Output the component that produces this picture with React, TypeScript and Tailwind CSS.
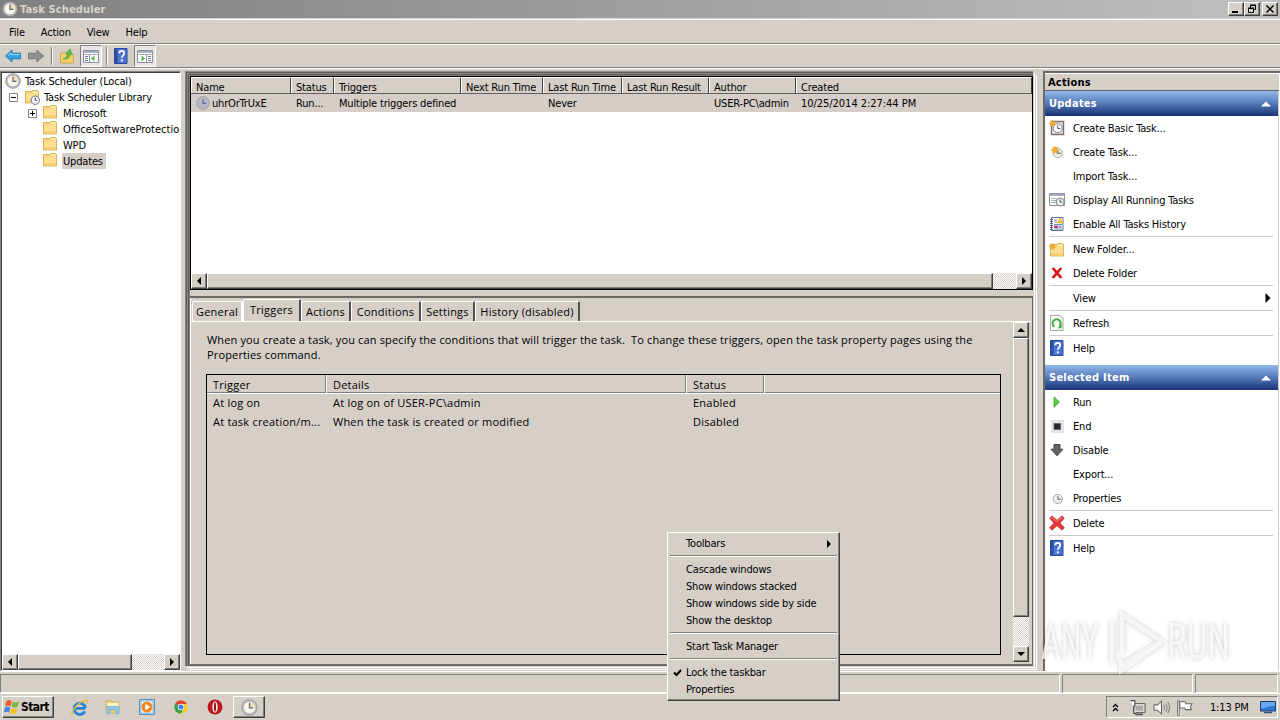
import type { ReactNode } from 'react';
import clsx from 'clsx';

const UI = 'font-["DejaVu_Sans_Condensed","DejaVu_Sans",sans-serif] [font-stretch:condensed] text-[11px] tracking-[-0.17px] text-black';
const RAISED = 'bg-[#d5cfc8] border border-t-white border-l-white border-r-[#404040] border-b-[#404040] shadow-[inset_-1px_-1px_0_#808080]';
const DITHER = 'bg-[repeating-conic-gradient(#fff_0_25%,#d5cfc8_0_50%)] bg-[length:2px_2px]';

type IconProps = { children: ReactNode; size?: number; className?: string };

function Svg({ children, size = 16, className }: IconProps) {
  return (
    <svg width={size} height={size} viewBox="0 0 16 16" className={clsx('shrink-0', className)}>
      {children}
    </svg>
  );
}

function Label({ children, className }: { children: ReactNode; className?: string }) {
  return <span className={clsx('pt-[2px]', className)}>{children}</span>;
}

function Clock({ size = 16, tint = '#fbf8ea' }: { size?: number; tint?: string }) {
  return (
    <Svg size={size}>
      <circle cx="8" cy="8" r="7.3" fill="#c3c5ca" stroke="#85878d" strokeWidth=".8" />
      <circle cx="8" cy="8" r="5.700" fill={tint} stroke="#a5a8b0" strokeWidth=".6" />
      {tint === '#fbf8ea' && <path d="M8 8V3.200A4.900 4.900 0 0 1 12.700 8z" fill="#f3dfa0" />}
      <path d="M8 3.500V8.400H11.500" fill="none" stroke="#59637e" strokeWidth="1.200" />
    </Svg>
  );
}

function FolderShape() {
  return (
    <>
      <path d="M1.500 2.500h6l1-1h5l1 1.300V14h-13z" fill="#f6d374" stroke="#cfa43f" strokeWidth=".8" />
      <path d="M2 4.500h12v9H2z" fill="#fbdf92" />
      <path d="M9 2.500h4.500v1.300H9z" fill="#fff7d6" />
      <path d="M2 11.500h12v2H2z" fill="#f4cc68" />
    </>
  );
}

const Folder = () => <Svg className="-translate-y-px"><FolderShape /></Svg>;

const FolderClock = () => (
  <Svg>
    <FolderShape />
    <circle cx="11.300" cy="11.200" r="4.200" fill="#f5f6f8" stroke="#6b7280" />
    <path d="M11.300 8.700v2.700h2" fill="none" stroke="#3f4a66" />
  </Svg>
);

const Burst = () => (
  <path d="M4.500 0l1 2.400L8 1.600 7 4l2 1.500-2.500.6L6.600 9 4.500 7.200 2 8.600l.6-2.700L0 4.600l2.600-.7L2.200 1.300l2 1z" fill="#f6b02a" stroke="#e0951d" strokeWidth=".6" />
);

const HelpIcon = () => (
  <Svg>
    <path d="M1.500.5h12.500v15H1.500z" fill="#4a74d0" stroke="#2a489a" />
    <path d="M2 1h2.500v14H2z" fill="#2c4ea6" />
    <path d="M6.200 5.300c0-3.200 5-3.200 5 0 0 2-2.400 2-2.400 4.400" fill="none" stroke="#fff" strokeWidth="1.700" />
    <path d="M7.800 11.400h2v2h-2z" fill="#fff" />
  </Svg>
);

// console window with a side pane, used by the toolbar toggles
const PaneIcon = ({ flip = false }: { flip?: boolean }) => (
  <Svg>
    <path d="M.5 2.500h15v12H.5z" fill="#fff" stroke="#8a90a0" />
    <path d="M1 3h14v2H1z" fill="#a9b1c2" />
    <path d="M1 6.500h14" stroke="#a3aaba" />
    {flip ? (
      <>
        <path d="M9.500 7v7" stroke="#8a93a6" />
        <path d="M11 8.500h3M11 10.500h3M11 12.500h3" stroke="#6b7ba6" />
        <path d="M4.500 7.500l3.500 3-3.500 3z" fill="#4db847" />
      </>
    ) : (
      <>
        <path d="M6.500 7v7" stroke="#8a93a6" />
        <path d="M2 8.500h3M2 10.500h3M2 12.500h3" stroke="#6b7ba6" />
        <path d="M11.500 7.500l-3.500 3 3.500 3z" fill="#4db847" />
      </>
    )}
  </Svg>
);

const BasicTaskIcon = () => (
  <Svg>
    <path d="M2.500 1.500h12v13h-12z" fill="#e9e4e2" stroke="#7d7072" strokeWidth="1.400" />
    <circle cx="8.700" cy="8.200" r="4.500" fill="#fff" stroke="#7d8490" />
    <path d="M8.700 5.300v3.200h2.600" fill="none" stroke="#45506c" />
    <g transform="scale(.75)"><Burst /></g>
  </Svg>
);

const TaskIcon = ({ burst = false }: { burst?: boolean }) => (
  <Svg>
    <circle cx="8.800" cy="9" r="4.600" fill="#eef0e2" stroke="#a3abb0" />
    <path d="M8.800 6.200v3.100h3" fill="none" stroke="#51607a" />
    {burst && <g transform="translate(2 2) scale(.85)"><Burst /></g>}
  </Svg>
);

const RunningIcon = () => (
  <Svg>
    <path d="M.5 1.500h15v12H.5z" fill="#fff" stroke="#8d929c" />
    <path d="M1 2h14v2H1z" fill="#a3afc6" />
    <path d="M2.500 6.500h5M2.500 8.500h5M2.500 10.500h5" stroke="#9ab7a4" />
    <circle cx="11.200" cy="10" r="4" fill="#edf3ef" stroke="#77838a" />
    <path d="M11.200 7.600v2.600h2" fill="none" stroke="#3f4a66" />
  </Svg>
);

const HistoryIcon = () => (
  <Svg>
    <path d="M2.500 1.500h11.500v13H2.500z" fill="#fff" stroke="#66709a" />
    <path d="M1 3.500h3M1 5.500h3M1 7.500h3M1 9.500h3M1 11.500h3M1 13.500h3" stroke="#474d63" strokeWidth=".8" />
    <path d="M5 4h3M5 6h3M5 8.500h8M5 13h8" stroke="#7d8fc4" />
    <path d="M11 2l3 5H8z" fill="#f8cf3c" stroke="#dba516" strokeWidth=".6" />
    <path d="M5 9.500h4V12H5z" fill="#a84a78" />
    <path d="M9.500 9.500h3V12h-3z" fill="#8fa0dc" />
  </Svg>
);

const NewFolderIcon = () => (
  <Svg className="translate-y-px">
    <FolderShape />
    <g transform="translate(0 1) scale(.75)"><Burst /></g>
  </Svg>
);

const SmallX = () => (
  <Svg><path d="M2.500 3.200l2.500-.6L8 5.800l3-3.200 2.300.6L9.800 8l3.700 4.600-2.600.8L8 10.100l-3 3.300-2.600-.8L6.200 8z" fill="#d8171c" /></Svg>
);

const BigX = () => (
  <Svg>
    <path d="M.700 3.300L3 .8 8 5.300 13 .8l2.300 2.400L11 8l4.400 4.700-2.400 2.500-5-4.500-5 4.500-2.400-2.500L5 8z" fill="#e5373b" stroke="#b3191f" strokeWidth=".6" />
    <path d="M2 3.200l1-1L8 6.700l5-4.500" fill="none" stroke="#f49495" strokeWidth=".9" />
  </Svg>
);

const RefreshIcon = () => (
  <Svg>
    <path d="M1.500.5h9.500l3 3v12H1.500z" fill="#f7fbf6" stroke="#a2ab9f" />
    <path d="M5.500 11.600A4 4 0 1 1 10.500 11" fill="none" stroke="#49a84a" strokeWidth="2" />
    <path d="M12.700 9v4.300H8.400z" fill="#49a84a" />
  </Svg>
);

const RunIcon = () => <Svg><path d="M5 2.800L10.500 8 5 13.400z" fill="#5fcb48" stroke="#3fa832" strokeWidth=".8" /></Svg>;
const EndIcon = () => (
  <Svg>
    <path d="M2 2h13v13H2z" fill="#e4e4e4" />
    <path d="M5 5.500h6.500v6H5z" fill="#26282d" stroke="#5d6068" strokeWidth=".8" />
  </Svg>
);
const DisableIcon = () => (
  <Svg><path d="M5 2.500h6v4.700h3L8 13.800 2 7.200h3z" fill="#606266" stroke="#393a3d" strokeWidth=".9" /></Svg>
);

function Arrow({ dir, size = 4 }: { dir: 'left' | 'right' | 'up' | 'down'; size?: number }) {
  const paths = { left: 'M6 0L2 4l4 4z', right: 'M2 0l4 4-4 4z', up: 'M0 6l4-4 4 4z', down: 'M0 2l4 4 4-4z' };
  return (
    <svg width={size * 2} height={size * 2} viewBox="0 0 8 8" className="shrink-0">
      <path d={paths[dir]} />
    </svg>
  );
}

function ScrollButton({ dir }: { dir: 'left' | 'right' | 'up' | 'down' }) {
  return <div className={clsx(RAISED, 'flex h-4 w-4 shrink-0 items-center justify-center')}><Arrow dir={dir} /></div>;
}

function HScroll({ thumb }: { thumb: string }) {
  return (
    <div className={clsx(DITHER, 'flex h-4 shrink-0')}>
      <ScrollButton dir="left" />
      <div className={clsx(RAISED, thumb)} />
      <div className="flex-1" />
      <ScrollButton dir="right" />
    </div>
  );
}

function TitleBar() {
  const btn = clsx(RAISED, 'flex h-[14px] w-4 items-center justify-center');
  return (
    <div className="flex h-[18px] shrink-0 items-center bg-linear-to-r from-[#808080] to-[#c0c0c0] pr-[2px] pl-[2px]">
      <Clock />
      <Label className="ml-[2px] flex-1 font-bold tracking-[0.12px] text-[#d8d4cc]">Task Scheduler</Label>
      <div className={btn}><svg width="10" height="10"><path d="M1 7h6v2H1z" /></svg></div>
      <div className={btn}>
        <svg width="10" height="10" fill="none" stroke="#000"><path d="M3.500 4V1.500h5v4H7M3 1h6M1.500 4.500h5v4h-5zM1 4h6" /></svg>
      </div>
      <div className={clsx(btn, 'ml-[2px]')}>
        <svg width="10" height="10" stroke="#000" strokeWidth="1.500"><path d="M1.500 1.500l7 7M8.500 1.500l-7 7" /></svg>
      </div>
    </div>
  );
}

function Toolbar() {
  const pressed = 'flex h-[22px] w-[22px] items-center justify-center border border-t-[#808080] border-l-[#808080] border-r-white border-b-white bg-[#eae7e3]';
  const sep = 'h-[18px] w-[2px] border-l border-[#808080] bg-white';
  return (
    <div className="flex h-[22px] shrink-0 items-center pl-[5px]">
      <Svg><path d="M.5 8L7 2v3.200h8.500v5.600H7V14z" fill="#35a3e2" stroke="#1b74b6" strokeWidth=".9" /><path d="M3 7.500L6 5v1.500h8.500" fill="none" stroke="#9bdcf8" /></Svg>
      <Svg className="ml-[7px]"><path d="M15.500 8L9 2v3.200H.5v5.600H9V14z" fill="#8e8f92" stroke="#6e6f73" strokeWidth=".9" /></Svg>
      <div className={clsx(sep, 'ml-[7px]')} />
      <Svg className="ml-[6px]">
        <path d="M1.500 5h5l1 1.500h7V15h-13z" fill="#f6d06a" stroke="#c79a32" strokeWidth=".8" />
        <path d="M4 11c3-1 4-3 4.500-5L6.500 5.500 11 1l2.500 5.500-2-.4C11 9 8.500 12 4 11z" fill="#5cba4e" stroke="#3c9a34" strokeWidth=".5" />
      </Svg>
      <div className={clsx(pressed, 'ml-[5px]')}><PaneIcon /></div>
      <div className={clsx(sep, 'ml-[4px]')} />
      <div className="ml-[5px]"><HelpIcon /></div>
      <div className={clsx(pressed, 'ml-[5px]')}><PaneIcon flip /></div>
    </div>
  );
}

function Expander({ plus = false }: { plus?: boolean }) {
  return (
    <svg width="9" height="9" className="shrink-0" fill="none">
      <path d="M.5.5h8v8h-8z" fill="#fff" stroke="#848284" />
      <path d={plus ? 'M2 4.500h5M4.500 2v5' : 'M2 4.500h5'} stroke="#000" />
    </svg>
  );
}

function Tree() {
  return (
    <div className="flex w-[181px] shrink-0 flex-col border-t border-r border-l border-t-[#808080] border-r-white border-l-[#808080] bg-white">
      <div className="flex-1 border-t border-l border-[#404040] whitespace-nowrap">
        <div className="flex h-4 items-center pl-[3px]"><Clock /><Label className="ml-[4px]">Task Scheduler (Local)</Label></div>
        <div className="flex h-4 items-center pl-[7px]"><Expander /><span className="ml-[6px]"><FolderClock /></span><Label className="ml-[4px]">Task Scheduler Library</Label></div>
        <div className="flex h-4 items-center pl-[26px]"><Expander plus /><span className="ml-[5px]"><Folder /></span><Label className="ml-[5px]">Microsoft</Label></div>
        <div className="flex h-4 items-center pl-[40px]"><Folder /><Label className="ml-[5px] tracking-[0px]">OfficeSoftwareProtectio</Label></div>
        <div className="flex h-4 items-center pl-[40px]"><Folder /><Label className="ml-[5px]">WPD</Label></div>
        <div className="flex h-4 items-center pl-[40px]"><Folder /><span className="ml-[4px] h-4 w-[44px] bg-[#d5cfc8] pl-px leading-[18px]">Updates</span></div>
      </div>
      <div className="mb-px border-l border-[#404040]"><HScroll thumb="w-[114px]" /></div>
    </div>
  );
}

const TASK_COLUMNS = [
  { label: 'Name', width: 'w-[100px]', value: 'uhrOrTrUxE' },
  { label: 'Status', width: 'w-[43px]', value: 'Run...' },
  { label: 'Triggers', width: 'w-[127px]', value: 'Multiple triggers defined' },
  { label: 'Next Run Time', width: 'w-[82px]', value: '' },
  { label: 'Last Run Time', width: 'w-[79px]', value: 'Never' },
  { label: 'Last Run Result', width: 'w-[87px]', value: '' },
  { label: 'Author', width: 'w-[87px]', value: 'USER-PC\\admin' },
  { label: 'Created', width: 'w-[236px]', value: '10/25/2014 2:27:44 PM' },
];

function TaskList() {
  return (
    <div className="flex h-[214px] shrink-0 flex-col border border-black bg-white whitespace-nowrap">
      <div className="flex h-[17px] shrink-0">
        {TASK_COLUMNS.map((col) => (
          <div key={col.label} className={clsx('h-full shrink-0 border-t border-r border-b border-t-white border-r-[#404040] border-b-[#606060] bg-[#d5cfc8] pl-[5px] leading-[19px] shadow-[inset_1px_0_0_#fff]', col.width)}>
            {col.label}
          </div>
        ))}
      </div>
      <div className="flex h-[18px] shrink-0 items-center bg-[#d5cdc7]">
        {TASK_COLUMNS.map((col, i) => (
          <div key={col.label} className={clsx('flex shrink-0 items-center pl-[5px]', col.width)}>
            {i === 0 && <span className="mr-[2px]"><Clock size={14} tint="#b4b9cc" /></span>}
            <span className={clsx('pt-[3px]', col.label === 'Created' && 'tracking-[-0.04px]')}>{col.value}</span>
          </div>
        ))}
      </div>
      <div className="flex-1" />
      <HScroll thumb="w-[786px]" />
    </div>
  );
}

const TABS = [
  { label: 'General', width: 'w-[51px]' },
  { label: 'Triggers', width: 'w-[58px]', active: true },
  { label: 'Actions', width: 'w-[50px]' },
  { label: 'Conditions', width: 'w-[70px]' },
  { label: 'Settings', width: 'w-[54px]' },
  { label: 'History (disabled)', width: 'w-[105px]' },
];

const TRIGGERS = [
  ['At log on', 'At log on of USER-PC\\admin', 'Enabled'],
  ['At task creation/m...', 'When the task is created or modified', 'Disabled'],
];

function TriggerPane() {
  return (
    <div className="mt-[6px] flex h-[370px] shrink-0 flex-col border-t-2 border-r border-b-2 border-[#6c6a67] font-['Open_Sans',sans-serif] tracking-[0.22px] [font-stretch:normal]">
      <div className="flex h-[23px] shrink-0 items-end border-l border-white pl-[1px]">
        {TABS.map((tab) => (
          <div
            key={tab.label}
            className={clsx(
              'shrink-0 rounded-t-[2px] border-t border-l border-white border-r-[#505050] text-center whitespace-nowrap',
              tab.active ? 'h-[22px] border-r-2 bg-[#d5cfc8] leading-[20px]' : 'h-[20px] border-r-2 leading-[20px]',
              tab.label === 'General' && 'border-r-white',
              tab.width,
            )}
          >
            {tab.label}
          </div>
        ))}
      </div>
      <div className="flex flex-1 border-t border-l border-white">
        <div className="flex flex-1 flex-col pt-[10px] pl-[15px]">
          <p className="h-[30px] w-[800px] pl-px leading-[15px] tracking-[0.15px] whitespace-pre">
            {'When you create a task, you can specify the conditions that will trigger the task.  To change these triggers, open the task property pages using the\nProperties command.'}
          </p>
          <div className="mt-[12px] h-[281px] w-[795px] border border-black">
            <div className="flex h-[19px] border-b border-white leading-[19px] shadow-[inset_0_-1px_0_#808080]">
              <div className="w-[119px] border-r border-[#808080] pl-[6px]">Trigger</div>
              <div className="w-[360px] border-r border-l border-r-[#808080] border-l-white pl-[6px]">Details</div>
              <div className="w-[78px] border-r border-l border-r-[#808080] border-l-white pl-[6px]">Status</div>
              <div className="flex-1 border-l border-white" />
            </div>
            {TRIGGERS.map(([trigger, details, status]) => (
              <div key={trigger} className="flex h-[19px] items-center whitespace-nowrap">
                <div className="w-[119px] pl-[6px]">{trigger}</div>
                <div className="w-[360px] pl-[7px]">{details}</div>
                <div className="pl-[7px]">{status}</div>
              </div>
            ))}
          </div>
        </div>
        <div className={clsx(DITHER, 'mb-[2px] flex w-4 flex-col')}>
          <ScrollButton dir="up" />
          <div className={clsx(RAISED, 'h-[279px]')} />
          <div className="flex-1" />
          <ScrollButton dir="down" />
        </div>
        <div className="w-[3px]" />
      </div>
    </div>
  );
}

type Action = { label: string; icon?: ReactNode; sep?: boolean; submenu?: boolean };

const UPDATES: Action[] = [
  { label: 'Create Basic Task...', icon: <BasicTaskIcon /> },
  { label: 'Create Task...', icon: <TaskIcon burst /> },
  { label: 'Import Task...' },
  { label: 'Display All Running Tasks', icon: <RunningIcon /> },
  { label: 'Enable All Tasks History', icon: <HistoryIcon />, sep: true },
  { label: 'New Folder...', icon: <NewFolderIcon /> },
  { label: 'Delete Folder', icon: <SmallX />, sep: true },
  { label: 'View', sep: true, submenu: true },
  { label: 'Refresh', icon: <RefreshIcon />, sep: true },
  { label: 'Help', icon: <HelpIcon /> },
];

const SELECTED: Action[] = [
  { label: 'Run', icon: <RunIcon /> },
  { label: 'End', icon: <EndIcon /> },
  { label: 'Disable', icon: <DisableIcon /> },
  { label: 'Export...' },
  { label: 'Properties', icon: <TaskIcon />, sep: true },
  { label: 'Delete', icon: <BigX />, sep: true },
  { label: 'Help', icon: <HelpIcon /> },
];

function ActionGroup({ title, items }: { title: string; items: Action[] }) {
  return (
    <>
      <div className="flex h-[25px] shrink-0 items-center justify-between bg-linear-to-b from-[#92b8ea] via-[#5479b8] to-[#1a3375] pr-[7px] pl-[4px] font-bold tracking-[0.25px] text-white">
        <Label>{title}</Label>
        <svg width="10" height="6"><path d="M0 5.500L5 .5l5 5z" fill="#fff" /></svg>
      </div>
      {items.map((item) => (
        <div key={item.label} className="shrink-0">
          <div className="flex h-6 items-center pr-[5px] pl-[4px]">
            <div className="mr-2 w-4">{item.icon}</div>
            <Label className="flex-1">{item.label}</Label>
            {item.submenu && <Arrow dir="right" size={5} />}
          </div>
          {item.sep && <div className="mr-[5px] ml-[4px] h-px bg-[#c9c9c9]" />}
        </div>
      ))}
    </>
  );
}

function ActionsPane() {
  return (
    <div className="flex w-[237px] shrink-0 flex-col border-t-2 border-l-2 border-[#6c6a67] bg-white">
      <div className="mr-px flex h-[18px] shrink-0 items-center border-t border-b border-t-white border-b-[#606060] bg-[#d5cfc8] pl-[3px] font-bold tracking-[0.2px]"><Label>Actions</Label></div>
      <div className="mr-px flex flex-1 flex-col border-r border-[#d5cfc8]">
        <ActionGroup title="Updates" items={UPDATES} />
        <div className="h-[5px] shrink-0" />
        <ActionGroup title="Selected Item" items={SELECTED} />
      </div>
    </div>
  );
}

function StatusBar() {
  const pane = 'border border-t-[#808080] border-l-[#808080] border-r-white border-b-white';
  return (
    <div className="flex h-[22px] shrink-0 gap-[2px] border-t border-white pt-[2px] pr-[2px]">
      <div className={clsx(pane, 'flex-1')} />
      <div className={clsx(pane, 'w-[131px]')} />
      <div className={clsx(pane, 'w-[83px]')} />
    </div>
  );
}

function Taskbar() {
  return (
    <div className="flex h-[27px] shrink-0 items-center border-t border-white pr-[2px] pl-[2px]">
      <div className={clsx(RAISED, 'flex h-[22px] w-[52px] items-center pl-px')}>
        <Svg>
          <path d="M2.500 2C4.500.6 6 1 7.700 2.200L6.600 7.400C5 6.300 3.300 6.300 1.200 7.300z" fill="#ee5a2a" />
          <path d="M8.700 2.600c2 1.200 4 1.300 6.300-.3l-1.300 5.300c-2 1.200-4 1.200-6 .2z" fill="#7bb93a" />
          <path d="M1 8.400C3 7.300 4.800 7.500 6.300 8.500L5 13.500C3.500 12.400 1.700 12.400-.2 13.500z" fill="#3f86d8" />
          <path d="M7.300 9c2 1.200 4 1 6-.1L12 14c-2 1.300-4 1.200-6 .1z" fill="#f8c128" />
        </Svg>
        <span className="ml-[1px] text-[12px] font-bold tracking-[-0.6px]">Start</span>
      </div>
      <Svg size={17} className="ml-[17px]">
        <path d="M3.500 8.800h10M13 11.600A5.300 5.300 0 1 1 13.500 8.400" fill="none" stroke="#2384d6" strokeWidth="2.600" />
        <path d="M1.500 14.800C-1 12 8 1.500 14.500 1.200c1.400.2 1 2 .4 3" fill="none" stroke="#efb92f" strokeWidth="1.400" />
      </Svg>
      <Svg className="ml-[17px]">
        <path d="M1 2h6l1 1h6v11H1z" fill="#f3d270" stroke="#c8a548" strokeWidth=".6" />
        <path d="M2.500 4h11v3h-11z" fill="#fdf6cd" />
        <path d="M2 7.500h12V15h-3v-4H5v4H2z" fill="#8fc6ea" stroke="#6aa5cf" strokeWidth=".6" />
      </Svg>
      <Svg className="ml-[18px]">
        <path d="M.5.5h15v15H.5z" fill="#9cc7ec" stroke="#5a8fc0" />
        <path d="M2.500 2.500h11v11h-11z" fill="#f8f3ea" />
        <circle cx="8" cy="8" r="5.500" fill="#f18a1c" />
        <path d="M6.300 4.800L11.300 8l-5 3.200z" fill="#fff" />
      </Svg>
      <Svg className="ml-[18px]">
        <circle cx="8" cy="8" r="6.700" fill="#fbc727" />
        <path d="M8 8L2.200 4.700A6.700 6.700 0 0 1 13.800 4.900L8 5z" fill="#e33e30" />
        <path d="M8 8L2.200 4.700A6.700 6.700 0 0 0 7.500 14.700l3-5z" fill="#35a352" />
        <circle cx="8" cy="8" r="3.200" fill="#fff" />
        <circle cx="8" cy="8" r="2.500" fill="#3f83ea" />
      </Svg>
      <Svg className="ml-[18px]">
        <circle cx="8" cy="8" r="7.500" fill="#c0161d" />
        <ellipse cx="8" cy="8" rx="2.700" ry="5.800" fill="#f6eaea" />
        <ellipse cx="8" cy="8" rx="1" ry="4.800" fill="#8f0f14" />
      </Svg>
      <div className={clsx(RAISED, 'ml-[10px] flex h-[22px] w-8 items-center justify-center')}><Clock size={17} /></div>
      <div className="flex-1" />
      <div className="flex h-[22px] w-[172px] items-center border border-t-[#808080] border-l-[#808080] border-r-white border-b-white">
        <svg width="7" height="9" className="ml-[5px]" fill="none" stroke="#000" strokeWidth="1.300"><path d="M1 4l2.500-2.500L6 4M1 8l2.500-2.500L6 8" /></svg>
        <Svg size={17} className="ml-[10px]">
          <path d="M4.500 4.500h10.500v8H4.500z" fill="#aaa9a5" stroke="#4a4a4a" />
          <path d="M5.500 5.500h8.500v6H5.500z" fill="none" stroke="#eee" />
          <path d="M6 14.500h7" stroke="#4a4a4a" strokeWidth="1.500" />
          <path d="M1.500 1.500h4v5h-1v7h2" fill="#fff" stroke="#4a4a4a" />
        </Svg>
        <Svg className="ml-[7px]" size={17}>
          <path d="M1 5.500h3L8 2v12l-4-3.500H1z" fill="#f4f4f4" stroke="#6b6b6b" />
          <path d="M10 5.500q1.500 2.500 0 5M12 4q2.500 4 0 8M14 2.500q3 5.500 0 11" fill="none" stroke="#858585" />
        </Svg>
        <Svg className="ml-[6px]" size={17}>
          <path d="M1.500 1.500h1.500v14H1.500z" fill="#fff" stroke="#666" strokeWidth=".8" />
          <path d="M3.500 2.500h5l1 2h5.500l-1.500 3 1 2.500H9L8 8.500H3.500z" fill="#fff" stroke="#666" />
        </Svg>
        <Label className="ml-[17px] w-[40px] whitespace-nowrap">1:13 PM</Label>
        <Svg className="ml-[10px]">
          <path d="M.5 2.500h15v9.500H.5z" fill="#2f74d0" stroke="#22406f" />
          <path d="M1 3h14v4C9 6 5 10 1 9.500z" fill="#69a8ef" />
          <path d="M4 13.500h8" stroke="#36557f" strokeWidth="1.500" />
        </Svg>
      </div>
    </div>
  );
}

const MENU_GROUPS = [
  ['Toolbars'],
  ['Cascade windows', 'Show windows stacked', 'Show windows side by side', 'Show the desktop'],
  ['Start Task Manager'],
  ['Lock the taskbar', 'Properties'],
];

function ContextMenu() {
  return (
    <div className={clsx(RAISED, 'absolute top-[532px] left-[667px] z-20 h-[169px] w-[173px] p-[2px]')}>
      {MENU_GROUPS.map((group, i) => (
        <div key={group[0]}>
          {i > 0 && <div className="mt-[3px] mb-[4px] h-[2px] border-t border-b border-t-[#808080] border-b-white" />}
          {group.map((label) => (
            <div key={label} className="flex h-[17px] items-center pr-[4px]">
              <div className="w-[16px] pt-px pl-[3px]">
                {label === 'Lock the taskbar' && (
                  <svg width="9" height="8" fill="none" stroke="#000" strokeWidth="2"><path d="M1 3.500L3.500 6 8 1" /></svg>
                )}
              </div>
              <Label className="flex-1 whitespace-nowrap">{label}</Label>
              {label === 'Toolbars' && <Arrow dir="right" />}
            </div>
          ))}
        </div>
      ))}
    </div>
  );
}

function Watermark() {
  return (
    <svg width="220" height="80" viewBox="-10 -5 220 80" className="absolute top-[600px] left-[1030px] drop-shadow-[0_0_2px_rgba(0,0,0,0.28)]">
      <g fill="#fff" fillOpacity=".75" fontFamily="Roboto, sans-serif" fontSize="50">
        <text transform="translate(1 54) scale(.68 1)">ANY</text>
        <text transform="translate(127 54) scale(.74 1)">RUN</text>
      </g>
      <g fill="none" stroke="#fff" strokeOpacity=".75" strokeWidth="5">
        <path d="M72 16v42M82 48V10l39 26-40 25" />
        <path d="M81 54v12l41-28" strokeWidth="4" />
      </g>
    </svg>
  );
}

export default function App() {
  return (
    <div className={clsx(UI, 'relative flex h-[720px] w-[1280px] flex-col overflow-hidden bg-[#d5cfc8]')}>
      <TitleBar />
      <div className="h-[2px] shrink-0 border-b border-white" />
      <div className="flex h-[23px] shrink-0 items-center gap-4 pt-px pl-[9px]">
        <Label>File</Label>
        <Label>Action</Label>
        <Label>View</Label>
        <Label>Help</Label>
      </div>
      <div className="h-[2px] shrink-0 border-t border-[#808080] bg-white" />
      <Toolbar />
      <div className="h-[2px] shrink-0 border-t border-[#808080] bg-white" />
      <div className="mt-[2px] flex h-[600px] shrink-0">
        <Tree />
        <div className="ml-[4px] h-[595px] w-[848px] bg-[#d5cfc8] pt-[5px] pl-[5px] shadow-[inset_1px_1px_0_#8c8a87,inset_2px_2px_0_#5c5a58,inset_3px_3px_0_#8c8a87,inset_4px_4px_0_#5c5a58,inset_5px_5px_0_#807e7b,1px_1px_0_#d5cfc8,2px_2px_0_#fff,3px_3px_0_#d5cfc8,4px_4px_0_#fff]">
          <TaskList />
          <TriggerPane />
        </div>
        <div className="w-[10px] shrink-0" />
        <ActionsPane />
      </div>
      <StatusBar />
      <Taskbar />
      <ContextMenu />
      <Watermark />
    </div>
  );
}
